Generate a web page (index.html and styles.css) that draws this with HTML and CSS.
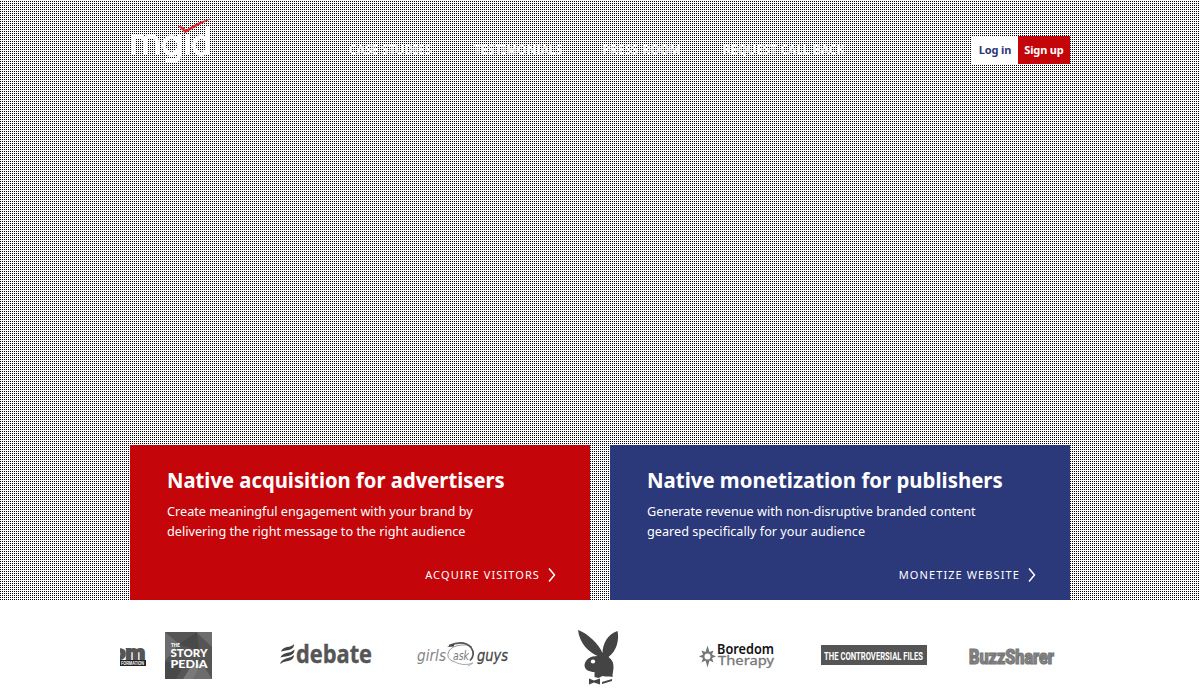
FILE: index.html
```html
<!DOCTYPE html>
<html lang="en">
<head>
<meta charset="utf-8">
<title>MGID</title>
<link rel="stylesheet" href="styles.css">
</head>
<body>
<section class="hero">
  <div class="wrap">
    <header class="header">
      <svg class="logo" width="82" height="44" viewBox="0 0 82 44" fill="none" stroke="#fff" stroke-width="4">
        <path d="M3 35V15M3 23q0-7 6-7t6 7v12M15 23q0-7 6-7t6 7v12M49 15v20q0 6-6 6h-8M49 25.500a7.500 8.500 0 1 0-15 0a7.500 8.500 0 1 0 15 0M57 15v20M78 6v29M78 25.500a7 8.500 0 1 0-14 0a7 8.500 0 1 0 14 0"/>
        <path d="M48 6l5 1 3 3Q67 2 80-1 68 5 55 13q-2-3-7-7z" fill="#d9252a" stroke="#d9252a" stroke-width=".5"/>
      </svg>
      <nav class="nav">
        <a class="n1">CASE STUDIES</a><a class="n2">TESTIMONIALS</a><a class="n3">PRESS ROOM</a><a class="n4">REQUEST CALL BACK</a>
      </nav>
      <div class="auth"><a class="login">Log in</a><a class="signup">Sign up</a></div>
    </header>
    <div class="cards">
      <article class="card red">
        <h2 class="h-adv">Native acquisition for advertisers</h2>
        <p>Create meaningful engagement with your brand by<br>delivering the right message to the right audience</p>
        <a class="more">ACQUIRE VISITORS<svg width="8" height="14" viewBox="0 0 8 14"><path d="M1 .5 6.5 7 1 13.500" fill="none" stroke="#fff" stroke-width="1.5"/></svg></a>
      </article>
      <article class="card blue">
        <h2 class="h-pub">Native monetization for publishers</h2>
        <p>Generate revenue with non-disruptive branded content<br>geared specifically for your audience</p>
        <a class="more">MONETIZE WEBSITE<svg width="8" height="14" viewBox="0 0 8 14"><path d="M1 .5 6.5 7 1 13.500" fill="none" stroke="#fff" stroke-width="1.5"/></svg></a>
      </article>
    </div>
  </div>
</section>
<section class="partners">
  <svg class="strip" width="960" height="100" viewBox="120 600 960 100">
    <g font-family="Liberation Sans, sans-serif" font-weight="bold">
      <text x="112" y="659" font-size="19" fill="#555" stroke="#555" stroke-width="2" textLength="33" lengthAdjust="spacingAndGlyphs">om</text>
      <path d="M120 660h26v6h-26z" fill="#222"/>
      <text x="121" y="665" font-size="4.500" fill="#fff" textLength="23" lengthAdjust="spacingAndGlyphs">FORMATION</text>
    </g>
    <path d="M165 632h47v47h-47z" fill="#555"/>
    <path d="M165 632l14 12-14 17zM196 632l16 15V632zM203 665l9 14h-25z" fill="#6d6d6d"/>
    <path d="M179 644l18-12 2 19zM165 661l18 5-7 13h-11z" fill="#494949"/>
    <path d="M190 668l11-5-8 16h-10z" fill="#797979"/>
    <g font-family="Lato, sans-serif" font-weight="900" fill="#fff">
      <text x="171" y="647" font-size="5" textLength="9" lengthAdjust="spacingAndGlyphs">THE</text>
      <text x="170.500" y="657" font-size="12" textLength="37" lengthAdjust="spacingAndGlyphs">STORY</text>
      <text x="170.500" y="667.500" font-size="12" textLength="37" lengthAdjust="spacingAndGlyphs">PEDIA</text>
    </g>
    <g fill="#444">
      <path d="M281 651.500q1-3.500 6-4.500 5-.5 7-3 .5 4.500-5 6-5 .5-8 1.500zM280.500 657.500q1-3.500 6-4.500 5-.5 8-3.500 0 5-6 6.500-5 .5-8 1.500zM280 664q1-4 6-5.500 5-.5 8-3.500 0 5-6 6-5 .5-8 3z"/>
    </g>
    <text x="296" y="663" font-family="Open Sans, sans-serif" font-weight="bold" font-size="25" fill="#555" stroke="#555" stroke-width=".4" textLength="76" lengthAdjust="spacingAndGlyphs">debate</text>
    <g font-family="DejaVu Sans, sans-serif" font-style="italic">
      <text x="417" y="661" font-size="16.500" fill="#858585" textLength="29" lengthAdjust="spacingAndGlyphs">girls</text>
      <text x="453" y="659.500" font-size="12.500" fill="#777" textLength="16" lengthAdjust="spacingAndGlyphs">ask</text>
      <text x="477" y="661" font-size="16.500" fill="#444" stroke="#444" stroke-width=".3" textLength="31" lengthAdjust="spacingAndGlyphs">guys</text>
    </g>
    <g fill="none"><path d="M454 662q-9-4-5-11 3-5 12-6 7-1 11 2" stroke="#999"/><path d="M449 645.500q15-6 22 2 5 7-1 13" stroke="#555" stroke-width="1.700"/><path d="M453 661q10 6 20 2l-5 3" stroke="#aaa"/><path d="M447 647l7-3.500v3z" fill="#444"/></g>
    <g fill="#444">
      <path d="M578 630c9 3 21 14 24.500 23 0-9 5-19 15-22 2 9-1 20-9 26 4 3 5 6 5 10 0 3-1 6-1 10-4-1-6 0-10-1l-4 2-4-1v-5c-5 0-10-2-10-7 1-6 6-9 13-9-9-4-18-13-19.500-26z"/>
      <ellipse cx="593" cy="661.500" rx="2.200" ry="2" fill="#fff"/>
      <path d="M589 678.500l5 2 6-2v6l-6-2-5 2zM602 682l10-3v2l-10 3z"/>
    </g>
    <g fill="#777">
      <path d="M707.500 645.500l2 6.500 4-1.500-1.500 4 4 2-4 1.500 1.500 4.500-4-2-2 7-2-7-4 2 1.500-4.500-4-1.500 4-2-1.500-4 4 1.500z"/><circle cx="707.500" cy="656.500" r="3" fill="#fff"/>
    </g>
    <text x="717" y="654" font-family="Noto Sans, sans-serif" font-weight="600" font-size="13.500" fill="#111" textLength="57" lengthAdjust="spacingAndGlyphs">Boredom</text>
    <text x="718" y="665" font-family="Noto Sans, sans-serif" font-size="13" fill="#777" stroke="#777" stroke-width=".3" textLength="56" lengthAdjust="spacingAndGlyphs">Therapy</text>
    <path d="M821 645h106v20H821z" fill="#555"/>
    <text x="824" y="659.500" font-family="Roboto, sans-serif" font-weight="bold" font-size="11.500" fill="#fff" textLength="99" lengthAdjust="spacingAndGlyphs">THE CONTROVERSIAL FILES</text>
    <text x="969" y="663.500" font-family="Roboto, sans-serif" font-weight="900" font-size="20" fill="#858585" stroke="#777" stroke-width="1.200" textLength="85" lengthAdjust="spacingAndGlyphs">BuzzSharer</text>
  </svg>
</section>
</body>
</html>
```
FILE: styles.css
```css
* { box-sizing: border-box; }
body { margin: 0; width: 1200px; height: 700px; overflow: hidden; background: #fff; font-family: "Noto Sans", sans-serif; }
.hero {
  height: 600px;
  background-color: #fff;
  background-image: conic-gradient(#fff 50%, #000 50% 75%, #fff 75%);
  background-size: 2px 2px;
}
.wrap { width: 940px; height: 600px; margin: 0 auto; display: flex; flex-direction: column; justify-content: space-between; }
.header { display: flex; align-items: flex-start; padding-top: 20px; }
.logo { overflow: visible; flex: none; }
.nav { display: flex; margin: 21px 0 0 137px; width: 623px; font-size: 12px; line-height: 18px; font-weight: 600; color: #fff; white-space: nowrap; }
.n1 { width: 125px; letter-spacing: .1px; }
.n2 { width: 128px; letter-spacing: .1px; }
.n3 { width: 121px; letter-spacing: .3px; }
.n4 { letter-spacing: .15px; }
.auth { display: flex; margin-top: 16px; font-size: 11px; font-weight: 700; line-height: 28px; text-align: center; white-space: nowrap; letter-spacing: -.15px; }
.login { width: 46px; background: #fff; color: #2b3879; }
.signup { width: 52px; background: #c40509; color: #fff; }
.cards { display: flex; gap: 20px; }
.card { width: 460px; height: 155px; padding: 19px 34px 0 37px; color: #fff; display: flex; flex-direction: column; white-space: nowrap; }
.red { background: #c40509; }
.blue { background: #2b3879; }
h2 { margin: 0; font-size: 22px; line-height: 30px; font-weight: 700; transform-origin: left; }
.h-adv { transform: scaleX(.92); }
.h-pub { transform: scaleX(.927); }
p { margin: 7px 0 0; font-size: 13px; line-height: 20px; transform: scaleX(.975); transform-origin: left; }
.more { margin-top: 24px; display: flex; align-items: center; justify-content: flex-end; gap: 8px; font-size: 11px; line-height: 20px; letter-spacing: 1.1px; }
.partners { height: 100px; display: flex; justify-content: center; }
.strip { display: block; overflow: hidden; }
```
